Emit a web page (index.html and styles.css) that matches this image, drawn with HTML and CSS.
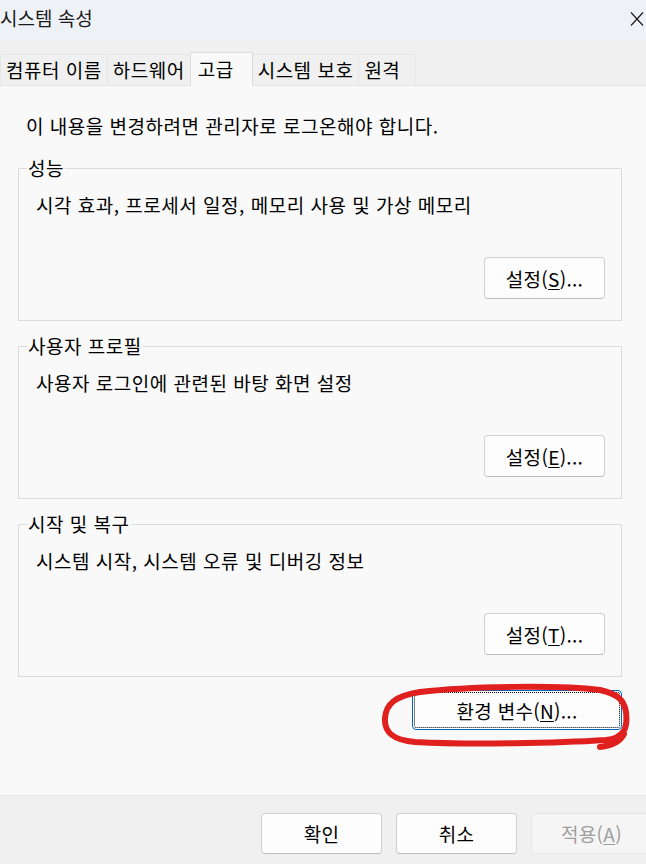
FILE: index.html
```html
<!DOCTYPE html>
<html lang="ko">
<head>
    <meta charset="UTF-8">
    <meta name="viewport" content="width=device-width, initial-scale=1.0">
    <title>시스템 속성</title>
    <link rel="stylesheet" href="styles.css">
</head>
<body>
    <div class="window">
        <div class="titlebar">
            <span class="title">시스템 속성</span>
            <svg class="close" width="14" height="16" viewBox="0 0 14 16">
                <path d="M1 1.5 L13 14.5 M13 1.5 L1 14.5" stroke="#1a1a1a" stroke-width="1.2" fill="none"/>
            </svg>
        </div>

        <div class="tabs">
            <div class="tab">컴퓨터 이름</div>
            <div class="tab">하드웨어</div>
            <div class="tab active">고급</div>
            <div class="tab">시스템 보호</div>
            <div class="tab short">원격</div>
        </div>

        <div class="panel">
            <p class="intro">이 내용을 변경하려면 관리자로 로그온해야 합니다.</p>

            <fieldset class="group">
                <legend>성능</legend>
                <p class="group-text">시각 효과, 프로세서 일정, 메모리 사용 및 가상 메모리</p>
                <div class="group-actions">
                    <button class="btn">설정(<u>S</u>)...</button>
                </div>
            </fieldset>

            <fieldset class="group">
                <legend>사용자 프로필</legend>
                <p class="group-text">사용자 로그인에 관련된 바탕 화면 설정</p>
                <div class="group-actions">
                    <button class="btn">설정(<u>E</u>)...</button>
                </div>
            </fieldset>

            <fieldset class="group">
                <legend>시작 및 복구</legend>
                <p class="group-text">시스템 시작, 시스템 오류 및 디버깅 정보</p>
                <div class="group-actions">
                    <button class="btn">설정(<u>T</u>)...</button>
                </div>
            </fieldset>

            <div class="env-row">
                <button class="btn btn-env focused">환경 변수(<u>N</u>)...</button>
            </div>
        </div>

        <div class="footer">
            <button class="btn btn-footer">확인</button>
            <button class="btn btn-footer">취소</button>
            <button class="btn btn-footer" disabled>적용(<u>A</u>)</button>
        </div>

        <!-- red pen mark drawn over the screenshot -->
        <svg class="markup" width="646" height="864" viewBox="0 0 646 864">
            <path d="M600 690 C560 685 470 686 420 692 C395 696 386 704 385 718 C384 732 392 740 415 742 C470 745 560 743 606 740 C624 738 628 728 626 712 C624 700 618 694 600 690 M624 734 C620 742 612 746 600 747"
                  stroke="#e0201f" stroke-width="6" fill="none" stroke-linecap="round" stroke-linejoin="round"/>
        </svg>
    </div>
</body>
</html>
```

FILE: styles.css
```css
body {
    margin: 0;
    padding: 0;
    font-family: "Noto Sans CJK KR", "Noto Sans", sans-serif;
    color: #000;
    overflow: hidden;
}
.window {
    position: relative;
    width: 646px;
    height: 864px;
    overflow: hidden;
    background: #f9f9f9;
}
.titlebar {
    height: 40px;
    display: flex;
    align-items: center;
    justify-content: space-between;
    background: #eef2f7;
    padding-bottom: 6px;
    box-sizing: border-box;
}
.title {
    font-size: 19px;
    color: #1a1a1a;
}
.close {
    margin-right: 2px;
    margin-top: 4px;
}
.tabs {
    height: 46px;
    display: flex;
    align-items: flex-end;
    background: #f0f0f0;
    border-bottom: 1px solid #e3e3e3;
    box-sizing: border-box;
}
.tab {
    height: 31px;
    line-height: 30px;
    padding: 0 5px;
    font-size: 19px;
    letter-spacing: 0.5px;
    border: 1px solid #e6e6e6;
    border-bottom: none;
    margin-right: -1px;
    box-sizing: border-box;
    background: #f0f0f0;
}
.tab.active {
    height: 34px;
    line-height: 32px;
    min-width: 63px;
    padding: 0 7px;
    margin-bottom: -1px;
    background: #f9f9f9;
    border-color: #dcdcdc;
    position: relative;
    z-index: 1;
}
.tab.short {
    min-width: 58px;
}
.panel {
    height: 709px;
    padding: 28px 24px 0 18px;
    box-sizing: border-box;
    background: #f9f9f9;
}
.intro {
    margin: 0 0 18px;
    padding-left: 8px;
    font-size: 19px;
    letter-spacing: 0.5px;
    line-height: 24px;
}
.group {
    margin: 0 0 13px;
    border: 1px solid #dcdcdc;
    padding: 13px 16px 21px 17px;
}
.group legend {
    font-size: 19px;
    letter-spacing: 0.5px;
    line-height: 24px;
    padding: 0 1px;
    margin-left: -9px;
}
.group-text {
    margin: 0 0 40px;
    font-size: 19px;
    letter-spacing: 0.5px;
    line-height: 24px;
}
.group-actions {
    display: flex;
    justify-content: flex-end;
}
.btn {
    font-family: inherit;
    font-size: 19px;
    letter-spacing: 0.3px;
    width: 121px;
    height: 42px;
    padding: 0;
    background: #fdfdfd;
    border: 1px solid #d0d0d0;
    border-bottom-color: #bdbdbd;
    border-radius: 4px;
    color: #000;
    position: relative;
}
.btn u {
    text-underline-offset: 2px;
}
.env-row {
    display: flex;
    justify-content: flex-end;
    margin-top: 12px;
}
.btn-env {
    width: 210px;
    height: 40px;
}
.btn.focused {
    border: 1px solid #0067c0;
}
.btn.focused::after {
    content: "";
    position: absolute;
    top: 1px;
    left: 1px;
    right: 1px;
    bottom: 1px;
    border: 1px dotted #000;
    border-radius: 2px;
}
.footer {
    height: 69px;
    border-top: 1px solid #e5e5e5;
    background: #f0f0f0;
    display: flex;
    gap: 14px;
    padding: 17px 0 0 261px;
    box-sizing: border-box;
}
.btn-footer {
    height: 41px;
    flex-shrink: 0;
}
.btn-footer:disabled {
    background: #f5f5f5;
    border-color: #e6e6e6;
    color: #9e9e9e;
}
.markup {
    position: absolute;
    top: 0;
    left: 0;
    pointer-events: none;
}
```
